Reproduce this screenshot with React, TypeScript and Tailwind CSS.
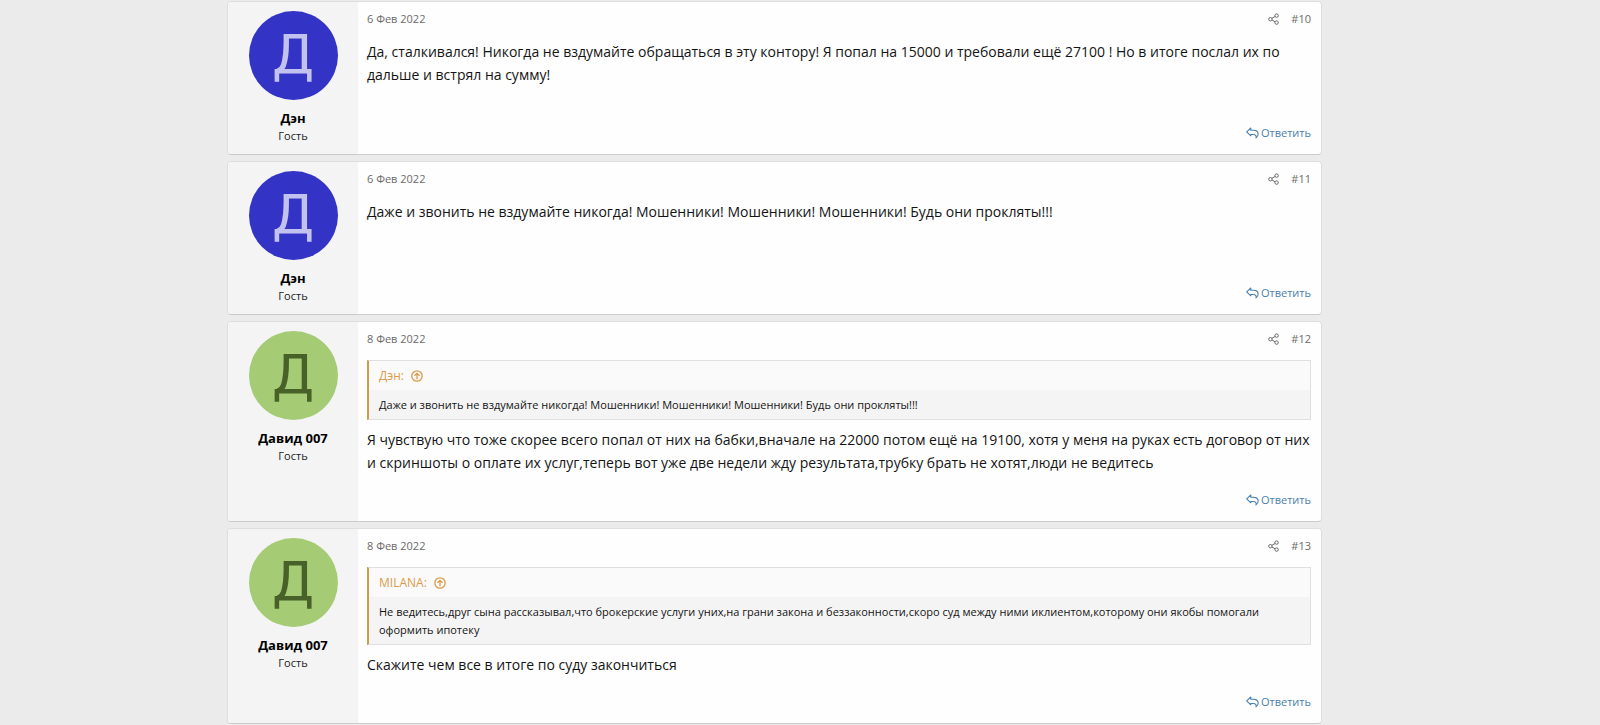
type Post = {
  id: number;
  author: string;
  date: string;
  tone: "blue" | "green";
  quote?: { author: string; text: string };
  text: string;
};

const posts: Post[] = [
  {
    id: 10,
    author: "Дэн",
    date: "6 Фев 2022",
    tone: "blue",
    text: "Да, сталкивался! Никогда не вздумайте обращаться в эту контору! Я попал на 15000 и требовали ещё 27100 ! Но в итоге послал их по дальше и встрял на сумму!",
  },
  {
    id: 11,
    author: "Дэн",
    date: "6 Фев 2022",
    tone: "blue",
    text: "Даже и звонить не вздумайте никогда! Мошенники! Мошенники! Мошенники! Будь они прокляты!!!",
  },
  {
    id: 12,
    author: "Давид 007",
    date: "8 Фев 2022",
    tone: "green",
    quote: {
      author: "Дэн",
      text: "Даже и звонить не вздумайте никогда! Мошенники! Мошенники! Мошенники! Будь они прокляты!!!",
    },
    text: "Я чувствую что тоже скорее всего попал от них на бабки,вначале на 22000 потом ещё на 19100, хотя у меня на руках есть договор от них и скриншоты о оплате их услуг,теперь вот уже две недели жду результата,трубку брать не хотят,люди не ведитесь",
  },
  {
    id: 13,
    author: "Давид 007",
    date: "8 Фев 2022",
    tone: "green",
    quote: {
      author: "MILANA",
      text: "Не ведитесь,друг сына рассказывал,что брокерские услуги уних,на грани закона и беззаконности,скоро суд между ними иклиентом,которому они якобы помогали оформить ипотеку",
    },
    text: "Скажите чем все в итоге по суду закончиться",
  },
];

const tones: Record<Post["tone"], string> = {
  blue: "bg-[#3333c5] text-[#c2c2f0]",
  green: "bg-[#a5cb75] text-[#476128]",
};

function ShareIcon() {
  return (
    <svg width="11" height="12" viewBox="0 0 11 12" fill="none" stroke="currentColor" strokeWidth="1">
      <circle cx="2.4" cy="6.2" r="1.7" />
      <circle cx="8.6" cy="2.6" r="1.7" />
      <circle cx="8.6" cy="9.6" r="1.7" />
      <path d="M3.9 5.3l3.2-1.8M3.9 7l3.2 1.8" />
    </svg>
  );
}

function ReplyIcon() {
  return (
    <svg width="13" height="12" viewBox="0 0 13 12" fill="none" stroke="currentColor" strokeWidth="1.1" strokeLinejoin="round">
      <path d="M0.7 4.8L4.8 1v2.2h2.4c3 0 5 1.4 5 3.9 0 1.5-.8 2.9-2.2 3.8.6-2.4-.5-3.4-2.9-3.4H4.8v1.3z" />
    </svg>
  );
}

function JumpIcon() {
  return (
    <svg width="12" height="12" viewBox="0 0 12 12" fill="none" stroke="currentColor" strokeWidth="1.3">
      <circle cx="6" cy="6" r="5.2" />
      <path d="M6 9.3V3.4M3.4 5.9L6 3.3l2.6 2.6" />
    </svg>
  );
}

function PostCard({ post }: { post: Post }) {
  return (
    <article className="flex overflow-hidden rounded border border-[#dedede] border-b-[#cbcbcb] bg-[#fefefe]">
      <aside className="flex w-[130px] shrink-0 flex-col items-center bg-[#f4f4f4] pt-[9px] pb-2.5">
        <div className={`flex size-[89px] items-center justify-center rounded-full pb-0.5 font-['DejaVu_Sans',sans-serif] text-[54px] leading-[54px] ${tones[post.tone]}`}>
          {post.author[0]}
        </div>
        <h4 className="mt-2 text-[13px] leading-5 font-bold text-black">{post.author}</h4>
        <h5 className="text-[11px] leading-4 text-[#222]">Гость</h5>
      </aside>

      <div className="flex min-w-0 flex-1 flex-col pt-[9px] pr-2.5 pb-3 pl-[9px]">
        <header className="flex h-4 items-center justify-between text-[11px] leading-4 text-[#6a6a6a]">
          <time>{post.date}</time>
          <div className="flex items-center gap-3">
            <button type="button" aria-label="Поделиться"><ShareIcon /></button>
            <a href={`#post-${post.id}`}>#{post.id}</a>
          </div>
        </header>

        <div className="mt-[13px] mb-[17px] flex-1">
          {post.quote && (
            <blockquote className="mb-2 border border-l-2 border-[#dfdfdf] border-l-[#cf9a4c] bg-[#f4f4f4]">
              <a href="#quote" className="flex h-[29px] items-center gap-[7px] bg-[#fafafa] px-2.5 text-xs text-[#dc9a4a]">
                {post.quote.author}: <JumpIcon />
              </a>
              <p className="px-2.5 pt-1.5 pb-[5px] text-[11px] leading-[18px]">{post.quote.text}</p>
            </blockquote>
          )}
          <p className="text-sm leading-[23px]">{post.text}</p>
        </div>

        <footer className="flex justify-end">
          <a href="#reply" className="flex items-center gap-0.5 text-[11px] leading-[18px] text-[#4a80ab]">
            <ReplyIcon />
            Ответить
          </a>
        </footer>
      </div>
    </article>
  );
}

export default function App() {
  return (
    <main className="min-h-screen bg-[#ebebeb] pr-[51px] font-['Open_Sans','Noto_Sans',sans-serif] text-[#141414]">
      <div className="mx-auto flex max-w-[1095px] flex-col gap-1.5 pt-px">
        {posts.map((post) => (
          <PostCard key={post.id} post={post} />
        ))}
      </div>
    </main>
  );
}
